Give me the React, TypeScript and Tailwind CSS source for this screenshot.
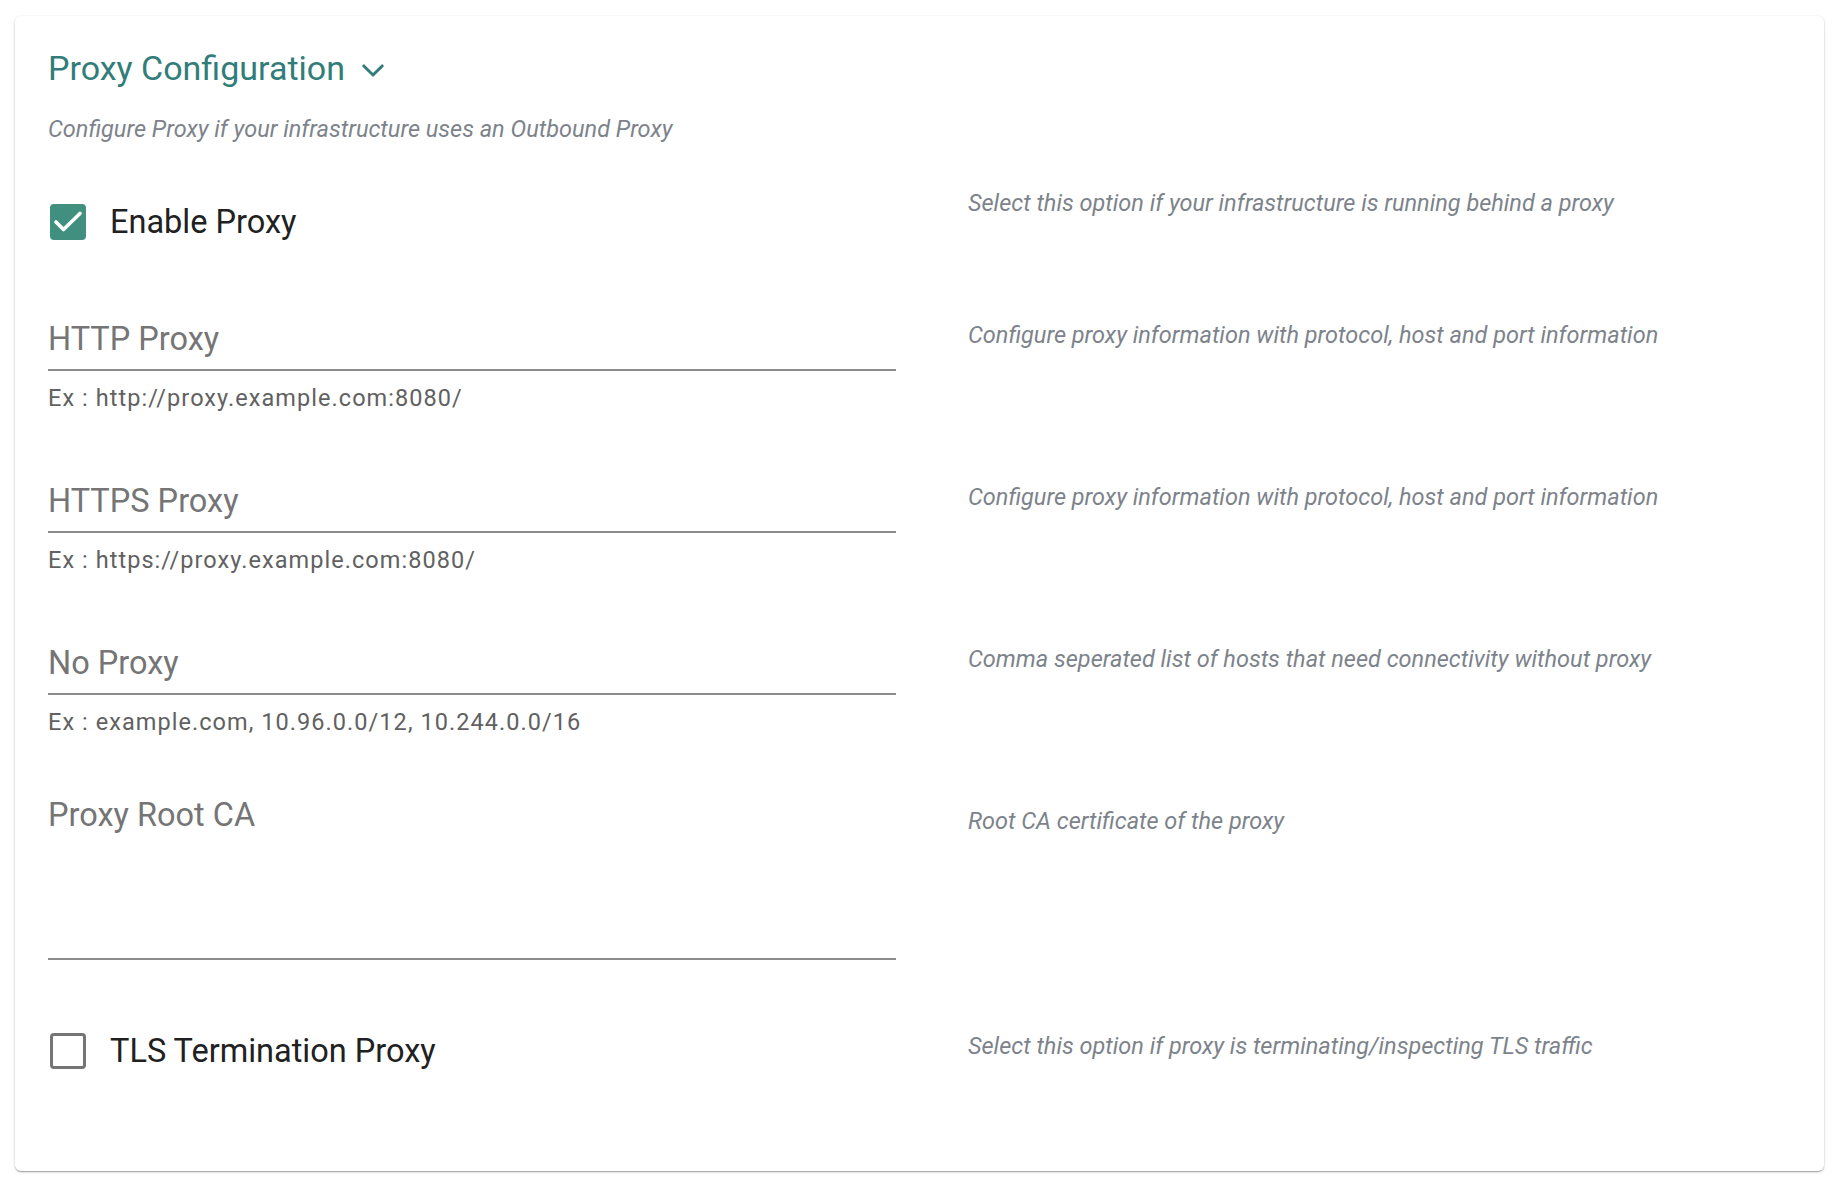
import React from "react";

const font = { fontFamily: "Roboto, 'Noto Sans', sans-serif" };

function Desc({ children, className = "" }: { children: React.ReactNode; className?: string }) {
  return (
    <p className={`text-[23.5px] leading-[24px] italic text-[#7d838b] ${className}`}>{children}</p>
  );
}

function Checkbox({ checked }: { checked: boolean }) {
  if (checked) {
    return (
      <span className="ml-[2px] block h-[36px] w-[36px] shrink-0 rounded-[4px] bg-[#41907f]">
        <svg viewBox="0 0 36 36" className="h-[36px] w-[36px]" fill="none">
          <path d="M6 18l7.5 7.5L30 9.5" stroke="white" strokeWidth="3.6" strokeLinecap="round" strokeLinejoin="round" />
        </svg>
      </span>
    );
  }
  return <span className="ml-[2px] block h-[36px] w-[36px] shrink-0 rounded-[4px] border-[3px] border-[#757575]" />;
}

function TextField({ label, helper }: { label: string; helper: string }) {
  return (
    <div>
      <div className="text-[32.5px] leading-[38px] text-[#757575]">{label}</div>
      <div className="mt-[11px] h-[2px] bg-[#8c8c8c]" />
      <div className="mt-[13px] text-[23.5px] leading-[28px] tracking-[0.045em] text-[#616161]">{helper}</div>
    </div>
  );
}

export default function App() {
  return (
    <div className="min-h-screen bg-white pl-[15px] pr-[18px] pt-[16px]" style={font}>
      <div className="rounded-[6px] bg-white pl-[33px] pr-[33px] pt-[33px] pb-[102px] shadow-[0_1px_3px_rgba(0,0,0,0.2),0_1px_1px_rgba(0,0,0,0.14),0_2px_1px_-1px_rgba(0,0,0,0.12)]">
        <div className="flex items-center">
          <h2 className="text-[34px] leading-[38px] text-[#317d7a]">Proxy Configuration</h2>
          <svg viewBox="0 0 24 14" className="ml-[17px] mt-[4px] h-[13px] w-[22px]" fill="none">
            <path d="M2 2l10 10 10-10" stroke="#317d7a" strokeWidth="3.2" strokeLinecap="round" strokeLinejoin="round" />
          </svg>
        </div>
        <p className="mt-[30px] text-[23.5px] leading-[24px] italic text-[#7d838b]">
          Configure Proxy if your infrastructure uses an Outbound Proxy
        </p>

        <div className="mt-[47px] grid grid-cols-[848px_1fr] gap-x-[72px]">
          <div className="flex items-center gap-[24px] pt-[16px]">
            <Checkbox checked />
            <span className="text-[32.5px] leading-[36px] text-[#212121]">Enable Proxy</span>
          </div>
          <Desc className="mt-[3px]">Select this option if your infrastructure is running behind a proxy</Desc>
        </div>

        <div className="mt-[80px] grid grid-cols-[848px_1fr] gap-x-[72px]">
          <TextField label="HTTP Proxy" helper="Ex : http://proxy.example.com:8080/" />
          <Desc className="mt-[3px]">Configure proxy information with protocol, host and port information</Desc>
        </div>

        <div className="mt-[70px] grid grid-cols-[848px_1fr] gap-x-[72px]">
          <TextField label="HTTPS Proxy" helper="Ex : https://proxy.example.com:8080/" />
          <Desc className="mt-[3px]">Configure proxy information with protocol, host and port information</Desc>
        </div>

        <div className="mt-[70px] grid grid-cols-[848px_1fr] gap-x-[72px]">
          <TextField label="No Proxy" helper="Ex : example.com, 10.96.0.0/12, 10.244.0.0/16" />
          <Desc className="mt-[3px]">Comma seperated list of hosts that need connectivity without proxy</Desc>
        </div>

        <div className="mt-[60px] grid grid-cols-[848px_1fr] gap-x-[72px]">
          <div>
            <div className="text-[32.5px] leading-[38px] text-[#757575]">Proxy Root CA</div>
            <div className="mt-[124px] h-[2px] bg-[#8c8c8c]" />
          </div>
          <Desc className="mt-[13px]">Root CA certificate of the proxy</Desc>
        </div>

        <div className="mt-[72px] grid grid-cols-[848px_1fr] gap-x-[72px]">
          <div className="flex items-center gap-[24px] pt-[1px]">
            <Checkbox checked={false} />
            <span className="text-[32.5px] leading-[36px] text-[#212121]">TLS Termination Proxy</span>
          </div>
          <Desc className="mt-[2px]">Select this option if proxy is terminating/inspecting TLS traffic</Desc>
        </div>
      </div>
    </div>
  );
}
